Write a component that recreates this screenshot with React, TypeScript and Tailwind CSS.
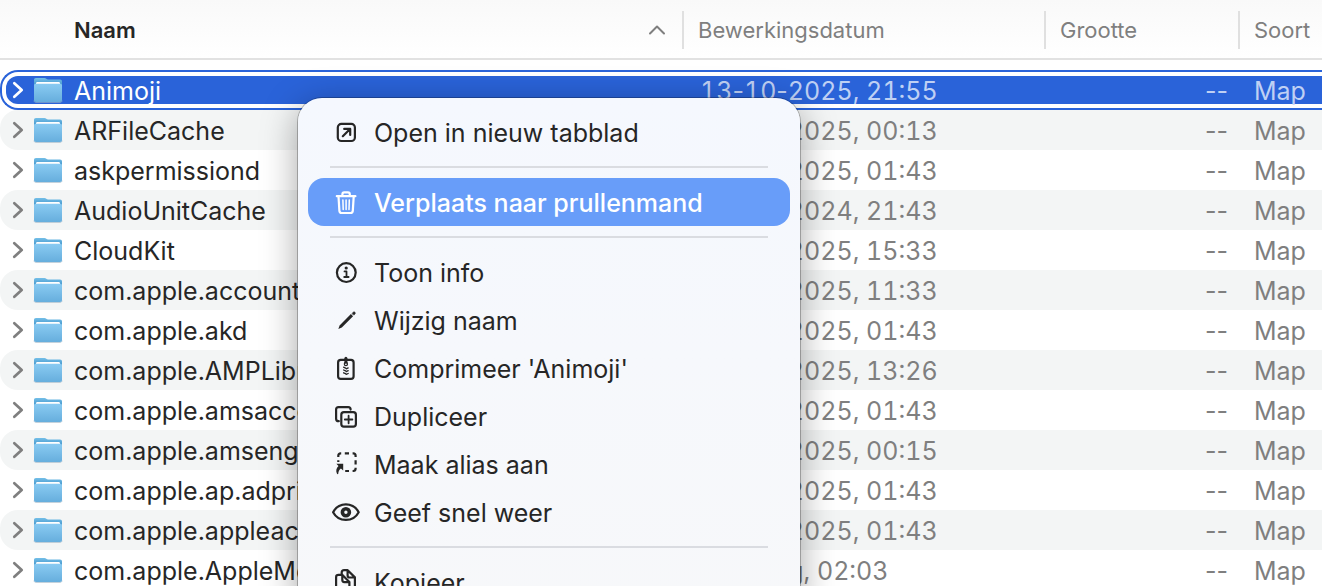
import type { ReactNode } from "react";
import clsx from "clsx";

interface FolderRow {
  name: string;
  date: string;
  selected?: boolean;
}

interface MenuEntry {
  label: string;
  icon: ReactNode;
  active?: boolean;
}

const rows: FolderRow[] = [
  { name: "Animoji", date: "13-10-2025, 21:55", selected: true },
  { name: "ARFileCache", date: "14-10-2025, 00:13" },
  { name: "askpermissiond", date: "13-10-2025, 01:43" },
  { name: "AudioUnitCache", date: "20-12-2024, 21:43" },
  { name: "CloudKit", date: "12-10-2025, 15:33" },
  { name: "com.apple.accountsd", date: "10-10-2025, 11:33" },
  { name: "com.apple.akd", date: "13-10-2025, 01:43" },
  { name: "com.apple.AMPLibraryAgent", date: "10-10-2025, 13:26" },
  { name: "com.apple.amsaccountsd", date: "13-10-2025, 01:43" },
  { name: "com.apple.amsengagementd", date: "14-10-2025, 00:15" },
  { name: "com.apple.ap.adprivacyd", date: "13-10-2025, 01:43" },
  { name: "com.apple.appleaccountd", date: "13-10-2025, 01:43" },
  { name: "com.apple.AppleMediaServices", date: "Vandaag, 02:03" },
];

function MenuIcon({ children }: { children: ReactNode }) {
  return (
    <svg
      viewBox="0 0 28 28"
      className="size-7 shrink-0"
      fill="none"
      stroke="currentColor"
      strokeWidth="2.2"
      strokeLinecap="round"
      strokeLinejoin="round"
      aria-hidden="true"
    >
      {children}
    </svg>
  );
}

const menuGroups: MenuEntry[][] = [
  [
    {
      label: "Open in nieuw tabblad",
      icon: (
        <MenuIcon>
          <rect x="5.8" y="5.9" width="17.1" height="17.1" rx="3.6" />
          <path d="M10.8 18.2l7-7M12.2 10.9h6v6" />
        </MenuIcon>
      ),
    },
  ],
  [
    {
      label: "Verplaats naar prullenmand",
      active: true,
      icon: (
        <MenuIcon>
          <path d="M4.8 8.2h18.6M10.4 8V6.2c0-1.2.7-1.8 1.8-1.8h3.8c1.1 0 1.8.6 1.8 1.8V8" />
          <path d="M6.5 8.4l.9 14.5c.1 1.4.9 2.1 2.2 2.1h9c1.3 0 2.1-.7 2.2-2.1l.9-14.5" />
          <path d="M10.9 12l.3 9.4M14.1 12v9.4M17.3 12l-.3 9.4" strokeWidth="1.5" />
        </MenuIcon>
      ),
    },
  ],
  [
    {
      label: "Toon info",
      icon: (
        <MenuIcon>
          <circle cx="14.3" cy="14.6" r="9.4" />
          <circle cx="14.2" cy="10" r="1.6" fill="currentColor" stroke="none" />
          <path d="M12.5 13.4h2v5.4M12.2 19h4.4" strokeWidth="1.8" />
        </MenuIcon>
      ),
    },
    {
      label: "Wijzig naam",
      icon: (
        <MenuIcon>
          <path d="M6.3 22.9l1.3-3.5L18.9 8.1l2.2 2.2L9.8 21.6z" fill="currentColor" stroke="none" />
          <path d="M20.3 7.3l1-1c.5-.5 1.1-.5 1.6 0s.5 1.1 0 1.6l-1 1z" fill="currentColor" strokeWidth=".8" />
        </MenuIcon>
      ),
    },
    {
      label: "Comprimeer 'Animoji'",
      icon: (
        <MenuIcon>
          <rect x="6.1" y="5.8" width="15.5" height="19" rx="2.6" />
          <path d="M13.9 4.2v4" strokeWidth="3" />
          <circle cx="13.9" cy="10" r="1.6" strokeWidth="1.2" />
          <path d="M11.6 13.2l2 .9M14.2 14.8l2-.9M11.6 16l2 .9M14.2 17.6l2-.9M11.6 18.8l2 .9M14.2 20.4l2-.9" strokeWidth="1.3" />
        </MenuIcon>
      ),
    },
    {
      label: "Dupliceer",
      icon: (
        <MenuIcon>
          <rect x="9.3" y="10.2" width="14.6" height="14.4" rx="2.6" />
          <path d="M6.8 19.2h-.3c-1.6 0-2.4-.8-2.4-2.4V7.6C4.1 6 4.9 5.2 6.5 5.2h9.700c1.6 0 2.4.8 2.4 2.4" />
          <path d="M16.6 13.7v7.6M12.8 17.5h7.6" strokeWidth="1.8" />
        </MenuIcon>
      ),
    },
    {
      label: "Maak alias aan",
      icon: (
        <MenuIcon>
          <path
            d="M6.3 7V5.8c0-1.6.8-2.4 2.4-2.4h.5M12.8 3.4h4.2M20.6 3.4h.6c1.6 0 2.4.8 2.4 2.4V7M23.6 10.3v4.2M23.6 17.8v.8c0 1.6-.8 2.4-2.4 2.4h-.6M17 21h-3.8M6.3 10.3v1.6"
            strokeLinecap="butt"
          />
          <path
            d="M4.4 13.8h6.8v6.8l-2.3-2.2c-1.6 1.3-2.6 3.1-2.6 5.1 0 .8-.9 1-1.3.3-1.3-2.6-.9-5.5 1.5-7.8z"
            fill="currentColor"
            stroke="none"
          />
        </MenuIcon>
      ),
    },
    {
      label: "Geef snel weer",
      icon: (
        <MenuIcon>
          <path d="M1.1 14.2C3.6 9.5 8.3 6.4 13.9 6.4s10.3 3.1 12.8 7.8c-2.5 4.7-7.2 7.7-12.8 7.7S3.6 18.9 1.1 14.2z" />
          <circle cx="13.9" cy="14.2" r="3.5" strokeWidth="3.6" />
        </MenuIcon>
      ),
    },
  ],
  [
    {
      label: "Kopieer",
      icon: (
        <MenuIcon>
          <path d="M9.7 6V4.6c0-1.6.8-2.4 2.4-2.4h3.6l7.2 7.2v9c0 1.6-.8 2.4-2.4 2.4h-2.1M15.6 2.6v4.9c0 1.3.7 2 2 2h5" />
          <path d="M4.1 9.2c0-1.6.8-2.4 2.4-2.4h3.7l7.2 7.2v9c0 1.6-.8 2.4-2.4 2.4H6.5c-1.6 0-2.4-.8-2.4-2.4zM10.3 7.2v4.9c0 1.3.7 2 2 2h4.8" />
        </MenuIcon>
      ),
    },
  ],
];

function FolderIcon() {
  return (
    <svg viewBox="0 0 30 26" className="h-[26px] w-[30px] shrink-0" aria-hidden="true">
      <defs>
        <linearGradient id="folder-front" x1="0" y1="0" x2="0" y2="1">
          <stop offset="0" stopColor="#8acbf2" />
          <stop offset="1" stopColor="#66aedd" />
        </linearGradient>
        <linearGradient id="folder-back" x1="0" y1="0" x2="0" y2="1">
          <stop offset="0" stopColor="#74bfe8" />
          <stop offset=".4" stopColor="#4f9fd2" />
        </linearGradient>
      </defs>
      <path d="M1 23.5c0 1.3.8 2 2 2h24c1.2 0 2-.7 2-2" fill="none" stroke="#9db4c4" strokeOpacity=".6" />
      <path d="M1 3c0-1.3.7-2 2-2h8.5c1.6 0 2 1.6 3.6 1.6H27c1.3 0 2 .7 2 2V15H1z" fill="url(#folder-back)" />
      <path d="M3 6.5C3 5.500 3.500 5 4.600 5h20.800C26.500 5 27 5.500 27 6.500v3H3z" fill="#fff" />
      <path d="M1 8.500C1 7.300 1.700 6.700 3 6.700h24c1.300 0 2 .6 2 1.800V23c0 1.300-.7 2-2 2H3c-1.300 0-2-.7-2-2z" fill="url(#folder-front)" />
    </svg>
  );
}

interface CellProps {
  selected?: boolean;
  striped: boolean;
  first?: boolean;
  className?: string;
  children: ReactNode;
}

// The selected row has a focus ring around a blue bar, the others a plain stripe
function Cell({ selected, striped, first, className, children }: CellProps) {
  return (
    <td className="p-0">
      <div
        className={clsx(
          "flex h-10 items-center border-y-2",
          selected ? "border-[#2a63d9]" : "border-transparent",
          striped && "bg-[#f3f5f5]",
          first && "rounded-l-[18px] border-l-2 pl-1"
        )}
      >
        <div
          className={clsx(
            "flex h-7 min-w-0 flex-1 items-center whitespace-nowrap",
            selected && "bg-[#2a63d9]",
            first && "rounded-l-xl",
            className
          )}
        >
          {children}
        </div>
      </div>
    </td>
  );
}

// Digits line up in columns while the hyphens keep their own narrow width
function DateText({ date }: { date: string }) {
  return (
    <span className="pt-0.5 tabular-nums">
      {date.split("-").map((part, index) => (
        <span key={index}>
          {index > 0 && <span className="proportional-nums">-</span>}
          {part}
        </span>
      ))}
    </span>
  );
}

function HeaderCell({ children, first }: { children: ReactNode; first?: boolean }) {
  return (
    <th className="p-0 pb-2.5 text-left font-normal">
      <div className="flex h-[60px] items-center border-b-2 border-[#e2e2e2] bg-linear-to-b from-[#f9f9f9] to-white pt-0.5">
        <button
          type="button"
          className={clsx(
            "flex h-[38px] flex-1 items-center text-left text-[22px] leading-7",
            first
              ? "justify-between pr-4 pl-[74px] font-semibold text-[#262626]"
              : "border-l-2 border-[#e0e0e0] pl-3.5 text-[#7f7f7f]"
          )}
        >
          {children}
        </button>
      </div>
    </th>
  );
}

function FileTable() {
  return (
    <table className="w-full table-fixed border-separate border-spacing-0">
      <colgroup>
        <col />
        <col className="w-[362px]" />
        <col className="w-[194px]" />
        <col className="w-[84px]" />
      </colgroup>
      <thead>
        <tr>
          <HeaderCell first>
            Naam
            <svg viewBox="0 0 18 12" className="h-3 w-[18px]" fill="none" stroke="#7f7f7f" strokeWidth="2" strokeLinecap="round" strokeLinejoin="round" aria-hidden="true">
              <path d="M2 9.5l7-7 7 7" />
            </svg>
          </HeaderCell>
          <HeaderCell>Bewerkingsdatum</HeaderCell>
          <HeaderCell>Grootte</HeaderCell>
          <HeaderCell>Soort</HeaderCell>
        </tr>
      </thead>
      <tbody className="text-[25px] leading-7 text-[#7f7f7f]">
        {rows.map(({ name, date, selected }, index) => {
          const cell = { selected, striped: index % 2 === 1 };
          const muted = selected && "text-[#bfd0f4]";

          return (
            <tr key={name} aria-selected={selected}>
              <Cell {...cell} first>
                <button
                  type="button"
                  aria-label={`Vouw ${name} uit`}
                  className={clsx("pl-1.5", selected ? "text-white" : "text-[#7f7f7f]")}
                >
                  <svg viewBox="0 0 12 18" className="h-[18px] w-3" fill="none" stroke="currentColor" strokeWidth="2.7" strokeLinecap="round" strokeLinejoin="round" aria-hidden="true">
                    <path d="M2.3 2.2L9.7 9l-7.4 6.8" />
                  </svg>
                </button>
                <span className="flex items-center gap-[11px] pl-[9px]">
                  <FolderIcon />
                  <span className={clsx("pt-0.5", selected ? "text-white" : "text-[#262626]")}>
                    {name}
                  </span>
                </span>
              </Cell>
              <Cell {...cell} className={clsx("pl-[18px]", muted)}>
                <DateText date={date} />
              </Cell>
              <Cell {...cell} className={clsx("justify-end pr-2.5", muted)}>
                <span className="pt-0.5">--</span>
              </Cell>
              <Cell {...cell} className={clsx("pl-4", muted)}>
                <span className="pt-0.5">Map</span>
              </Cell>
            </tr>
          );
        })}
      </tbody>
    </table>
  );
}

function ContextMenu() {
  return (
    <div
      role="menu"
      className="absolute top-[98px] left-[298px] w-[502px] rounded-3xl bg-linear-to-b from-[#f5f8fe] to-[#f7f8fa] p-2.5 shadow-[0_0_0_1px_rgba(0,0,0,0.25),0_8px_36px_rgba(0,0,0,0.36)]"
    >
      {menuGroups.map((group, index) => (
        <div key={group[0].label} role="group">
          {index > 0 && <hr className="mx-[22px] my-2.5 border-t-2 border-[#dadce1]" />}
          {group.map(({ label, icon, active }) => (
            <button
              key={label}
              type="button"
              role="menuitem"
              className={clsx(
                "flex h-12 w-full items-center gap-3.5 rounded-2xl pl-6 text-left text-[25px] leading-7",
                active ? "bg-[#689df9] font-medium text-white" : "text-[#262626]"
              )}
            >
              {icon}
              <span className="pt-0.5">{label}</span>
            </button>
          ))}
        </div>
      ))}
    </div>
  );
}

export default function App() {
  return (
    <main className="relative h-screen overflow-hidden bg-white font-['Inter',sans-serif]">
      <FileTable />
      <ContextMenu />
    </main>
  );
}
